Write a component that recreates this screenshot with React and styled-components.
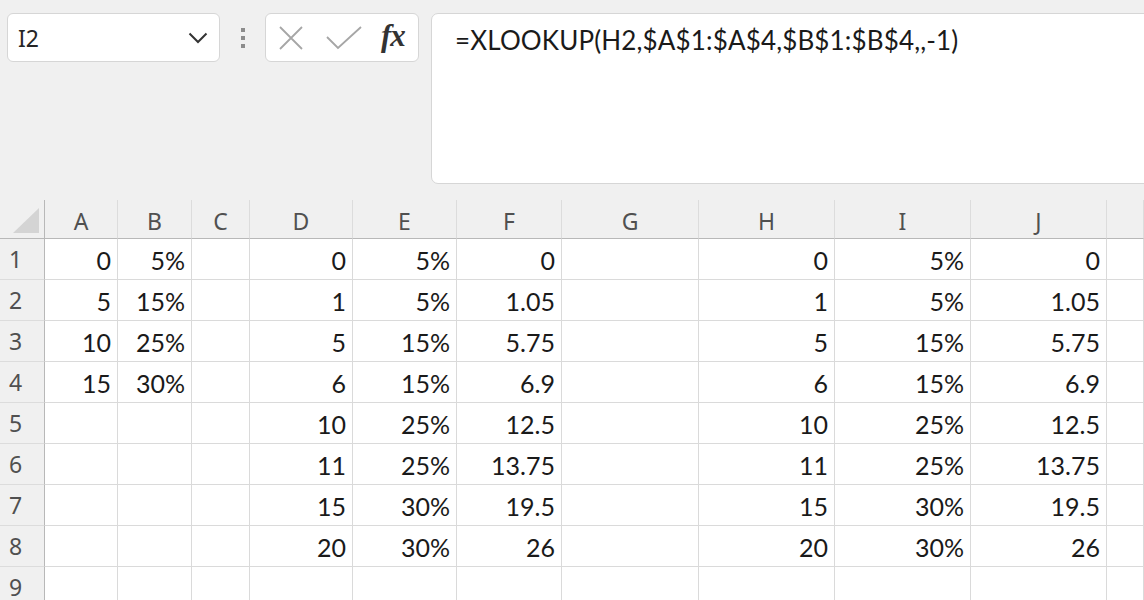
import React from "react";
import styled, { createGlobalStyle } from "styled-components";

const GlobalStyle = createGlobalStyle`
  html, body {
    margin: 0;
    padding: 0;
    background: #f0f0f0;
  }
`;

const columns = [
  { name: "A", width: 73 },
  { name: "B", width: 74 },
  { name: "C", width: 58 },
  { name: "D", width: 103 },
  { name: "E", width: 104 },
  { name: "F", width: 105 },
  { name: "G", width: 137 },
  { name: "H", width: 136 },
  { name: "I", width: 136 },
  { name: "J", width: 136 },
  { name: "", width: 0 },
];

const rows = [
  ["0", "5%", "", "0", "5%", "0", "", "0", "5%", "0", ""],
  ["5", "15%", "", "1", "5%", "1.05", "", "1", "5%", "1.05", ""],
  ["10", "25%", "", "5", "15%", "5.75", "", "5", "15%", "5.75", ""],
  ["15", "30%", "", "6", "15%", "6.9", "", "6", "15%", "6.9", ""],
  ["", "", "", "10", "25%", "12.5", "", "10", "25%", "12.5", ""],
  ["", "", "", "11", "25%", "13.75", "", "11", "25%", "13.75", ""],
  ["", "", "", "15", "30%", "19.5", "", "15", "30%", "19.5", ""],
  ["", "", "", "20", "30%", "26", "", "20", "30%", "26", ""],
  ["", "", "", "", "", "", "", "", "", "", ""],
];

const Page = styled.div`
  width: 1144px;
  height: 600px;
  overflow: hidden;
  background: #f0f0f0;
`;

const FormulaBar = styled.div`
  height: 200px;
  display: flex;
  align-items: flex-start;
  padding: 13px 0 0 7px;
  box-sizing: border-box;
`;

const NameBox = styled.div`
  width: 213px;
  height: 49px;
  box-sizing: border-box;
  background: #fff;
  border: 1px solid #d6d6d6;
  border-radius: 6px;
  display: flex;
  align-items: center;
  justify-content: space-between;
  padding: 0 11px 0 10px;
  font-family: "Noto Sans", "Open Sans", sans-serif;
  font-size: 23px;
  color: #262626;
`;

const Grip = styled.div`
  width: 45px;
  height: 49px;
  display: flex;
  flex-direction: column;
  align-items: center;
  justify-content: center;
  gap: 4px;
  span {
    width: 4px;
    height: 4px;
    background: #8c8c8c;
  }
`;

const IconBox = styled.div`
  width: 154px;
  height: 49px;
  box-sizing: border-box;
  background: #fff;
  border: 1px solid #d6d6d6;
  border-radius: 6px;
  display: flex;
  align-items: center;
  padding: 0 0 0 12px;
  gap: 22px;
`;

const Fx = styled.span`
  font-family: "Liberation Serif", "DejaVu Serif", serif;
  font-style: italic;
  font-weight: bold;
  font-size: 31px;
  color: #333;
  letter-spacing: -1px;
  margin-left: -3px;
  line-height: 1;
  padding-bottom: 4px;
`;

const FormulaInput = styled.div`
  flex: 1;
  height: 171px;
  margin-left: 12px;
  margin-right: -12px;
  box-sizing: border-box;
  background: #fff;
  border: 1px solid #d6d6d6;
  border-radius: 7px;
  padding: 10px 0 0 23px;
  font-family: Lato, "Open Sans", sans-serif;
  font-size: 26px;
  color: #1a1a1a;
  letter-spacing: 0.15px;
`;

const Sheet = styled.div`
  display: grid;
  grid-template-columns: 45px ${columns.map((c) => (c.width ? `${c.width}px` : "1fr")).join(" ")};
  grid-template-rows: 39px;
  grid-auto-rows: 41px;
  background: #fff;
`;

const Corner = styled.div`
  background: #f0f0f0;
  border-right: 1px solid #b8b8b8;
  border-bottom: 1px solid #b8b8b8;
  display: flex;
  align-items: flex-end;
  justify-content: flex-end;
  padding: 0 5px 5px 0;
`;

const Triangle = styled.div`
  width: 0;
  height: 0;
  border-left: 26px solid transparent;
  border-bottom: 25px solid #d4d4d4;
`;

const ColHeader = styled.div`
  background: #f0f0f0;
  border-right: 1px solid #dcdcdc;
  border-bottom: 1px solid #b8b8b8;
  display: flex;
  align-items: center;
  justify-content: center;
  font-family: "Noto Sans", "Open Sans", sans-serif;
  font-size: 23px;
  color: #505050;
  padding-top: 3px;
`;

const RowHeader = styled.div`
  background: #f0f0f0;
  border-right: 1px solid #b8b8b8;
  border-bottom: 1px solid #dcdcdc;
  display: flex;
  align-items: center;
  padding-left: 9px;
  font-family: "Noto Sans", "Open Sans", sans-serif;
  font-size: 23px;
  color: #505050;
`;

const Cell = styled.div`
  border-right: 1px solid #dadada;
  border-bottom: 1px solid #dadada;
  display: flex;
  align-items: flex-end;
  justify-content: flex-end;
  padding: 0 6px 4px 0;
  font-family: Lato, "Open Sans", sans-serif;
  font-size: 25px;
  color: #1a1a1a;
  line-height: 1.2;
  overflow: hidden;
  white-space: nowrap;
`;

const XIcon = () => (
  <svg width="26" height="24" viewBox="0 0 26 24">
    <path d="M2 1 L24 23 M24 1 L2 23" stroke="#a6a6a6" strokeWidth="1.8" fill="none" />
  </svg>
);

const CheckIcon = () => (
  <svg width="36" height="24" viewBox="0 0 36 24">
    <path d="M1 11 L12 22 L35 1" stroke="#a6a6a6" strokeWidth="1.8" fill="none" />
  </svg>
);

const Chevron = () => (
  <svg width="20" height="12" viewBox="0 0 20 12">
    <path d="M1.5 1.5 L10 10 L18.5 1.5" stroke="#333" strokeWidth="2" fill="none" />
  </svg>
);

const App = () => {
  return (
    <Page>
      <GlobalStyle />
      <FormulaBar>
        <NameBox>
          <span>I2</span>
          <Chevron />
        </NameBox>
        <Grip>
          <span />
          <span />
          <span />
        </Grip>
        <IconBox>
          <XIcon />
          <CheckIcon />
          <Fx>fx</Fx>
        </IconBox>
        <FormulaInput>=XLOOKUP(H2,$A$1:$A$4,$B$1:$B$4,,-1)</FormulaInput>
      </FormulaBar>
      <Sheet>
        <Corner>
          <Triangle />
        </Corner>
        {columns.map((col, i) => (
          <ColHeader key={i}>{col.name}</ColHeader>
        ))}
        {rows.map((row, r) => (
          <React.Fragment key={r}>
            <RowHeader>{r + 1}</RowHeader>
            {row.map((val, c) => (
              <Cell key={c}>{val}</Cell>
            ))}
          </React.Fragment>
        ))}
      </Sheet>
    </Page>
  );
};

export default App;
